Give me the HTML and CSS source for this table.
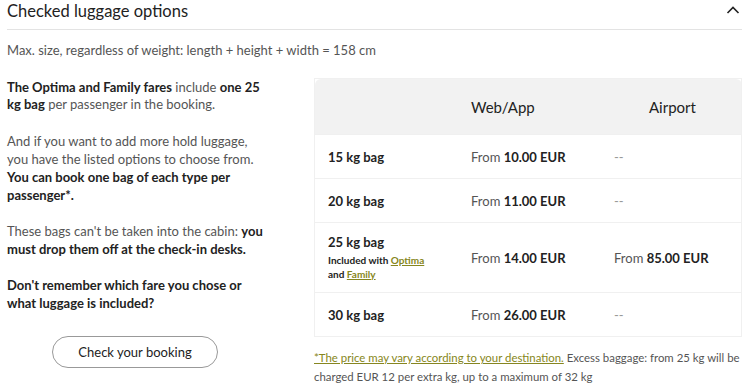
FILE: index.html
```html
<!DOCTYPE html>
<html lang="en">
<head>
    <meta charset="UTF-8">
    <title>Checked luggage options</title>
    <link rel="stylesheet" href="styles.css">
</head>
<body>
    <div class="panel">
        <div class="panel-head">
            <h2>Checked luggage options</h2>
            <svg class="chevron" width="14" height="10" viewBox="0 0 14 10">
                <path d="M1.5 8 L7 2.5 L12.5 8" fill="none" stroke="#222" stroke-width="1.6"/>
            </svg>
        </div>

        <p class="size-note">Max. size, regardless of weight: length + height + width = 158 cm</p>

        <div class="content">
            <div class="info">
                <p class="first"><b>The Optima and Family fares</b> include <b>one 25 kg bag</b> per passenger in the booking.</p>
                <p>And if you want to add more hold luggage, you have the listed options to choose from. <b>You can book one bag of each type per passenger*.</b></p>
                <p>These bags can't be taken into the cabin: <b>you must drop them off at the check-in desks.</b></p>
                <p><b>Don't remember which fare you chose or what luggage is included?</b></p>
                <div class="btn-wrap">
                    <button type="button">Check your booking</button>
                </div>
            </div>

            <div class="prices">
                <table>
                    <thead>
                        <tr>
                            <th></th>
                            <th class="col-web">Web/App</th>
                            <th class="col-airport">Airport</th>
                        </tr>
                    </thead>
                    <tbody>
                        <tr>
                            <td class="bag">15 kg bag</td>
                            <td>From <b>10.00 EUR</b></td>
                            <td class="none">--</td>
                        </tr>
                        <tr>
                            <td class="bag">20 kg bag</td>
                            <td>From <b>11.00 EUR</b></td>
                            <td class="none">--</td>
                        </tr>
                        <tr class="tall">
                            <td class="bag">25 kg bag
                                <span class="included">Included with <a href="#">Optima</a><br>and <a href="#">Family</a></span>
                            </td>
                            <td>From <b>14.00 EUR</b></td>
                            <td>From <b>85.00 EUR</b></td>
                        </tr>
                        <tr>
                            <td class="bag">30 kg bag</td>
                            <td>From <b>26.00 EUR</b></td>
                            <td class="none">--</td>
                        </tr>
                    </tbody>
                </table>
                <p class="footnote"><a href="#">*The price may vary according to your destination.</a> Excess baggage: from 25 kg will be charged EUR 12 per extra kg, up to a maximum of 32 kg</p>
            </div>
        </div>
    </div>
</body>
</html>
```

FILE: styles.css
```css
body {
    margin: 0;
    font-family: Lato, "Open Sans", sans-serif;
    color: #555;
    background: #fff;
}
b {
    color: #222;
    font-weight: bold;
}
.panel {
    width: 735px;
    padding-left: 7px;
}
.panel-head {
    display: flex;
    justify-content: space-between;
    align-items: center;
    height: 29px;
    border-bottom: 1px solid #e3e3e3;
}
.panel-head h2 {
    margin: 0;
    margin-top: -8px;
    font-size: 16.5px;
    font-weight: normal;
    color: #222;
}
.chevron {
    margin-top: -9px;
    margin-right: 2px;
}
.size-note {
    margin: 11px 0 0;
    font-size: 13px;
    line-height: 18px;
}
.content {
    display: flex;
    margin-top: 19px;
}
.info {
    width: 262px;
    font-size: 13px;
    line-height: 18px;
    margin-top: 1px;
}
.info p {
    margin: 0 0 18px;
}
.info p.first {
    line-height: 17px;
    margin-bottom: 19px;
}
.btn-wrap {
    padding-left: 45px;
    padding-top: 6px;
}
button {
    font-family: inherit;
    font-size: 13px;
    color: #222;
    background: #fff;
    border: 1px solid #999;
    border-radius: 16px;
    width: 166px;
    height: 32px;
    cursor: pointer;
}
.prices {
    margin-left: 45px;
    width: 428px;
}
table {
    width: 100%;
    border-collapse: collapse;
    font-size: 13px;
    border: 1px solid #f0f0f0;
}
thead th {
    background: #f2f2f2;
    height: 55px;
    font-size: 15px;
    font-weight: normal;
    color: #222;
    text-align: left;
    padding: 0;
}
thead th:first-child {
    border-top-left-radius: 6px;
}
thead th:last-child {
    border-top-right-radius: 6px;
}
.col-web {
    padding-left: 13px;
}
.col-airport {
    padding-left: 48px;
}
td {
    height: 43px;
    padding: 0 13px;
    border-top: 1px solid #f0f0f0;
    color: #555;
}
td:first-child {
    width: 117px;
}
td:nth-child(2) {
    width: 117px;
}
.tall td {
    height: 69px;
}
.bag {
    color: #222;
    font-weight: bold;
}
.included {
    display: block;
    font-size: 10px;
    line-height: 14px;
    margin-top: 3px;
}
a {
    color: #868620;
    text-decoration: underline;
}
.none {
    color: #999;
}
.footnote {
    margin: 11px 0 0;
    font-size: 11.4px;
    line-height: 19px;
}
```
